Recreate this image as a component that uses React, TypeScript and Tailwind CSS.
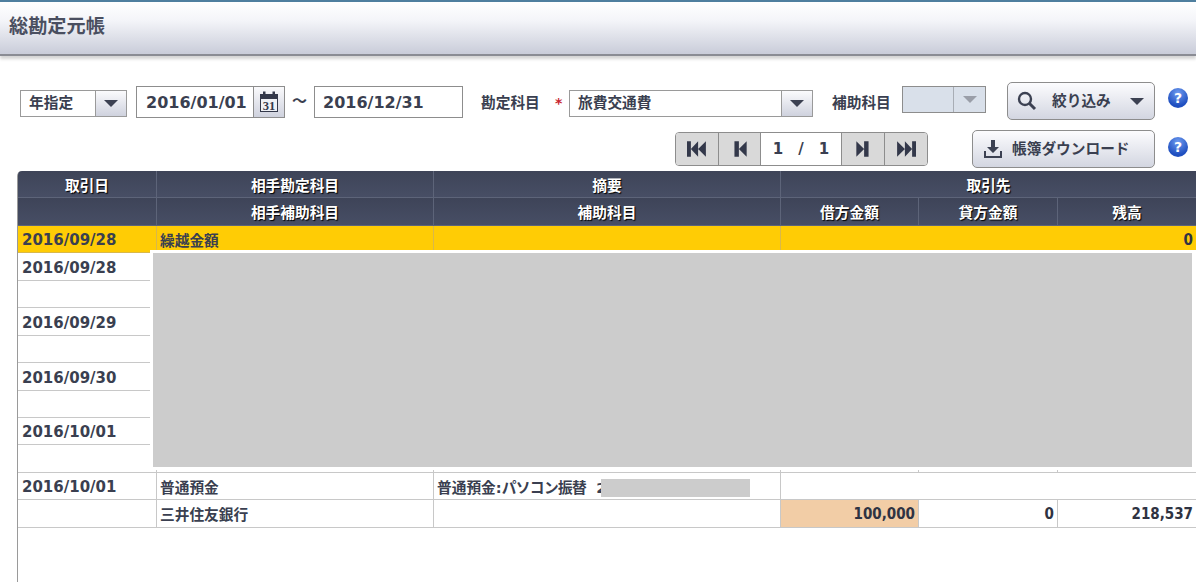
const FONT = "font-['DejaVu_Sans','Noto_Sans_CJK_JP',sans-serif]"

function Arrow({ className = 'fill-[#3c4152]' }: { className?: string }) {
  return (
    <svg width="14" height="7" viewBox="0 0 14 7" className={className}>
      <path d="M0 0h14L7 7z" />
    </svg>
  )
}

function Help({ className = '' }: { className?: string }) {
  return (
    <div className={`flex h-[20px] w-[20px] items-center justify-center rounded-full bg-[radial-gradient(circle_at_50%_25%,#6f9cf0,#1f4fc0_70%)] text-[14px] font-bold leading-none text-white ${className}`}>
      ?
    </div>
  )
}

function CalendarIcon() {
  return (
    <svg width="20" height="22" viewBox="0 0 20 22">
      <rect x="1.500" y="3.500" width="17" height="17" fill="#eef0f4" stroke="#33384a" />
      <rect x="1" y="3" width="18" height="5" fill="#33384a" />
      <rect x="4" y="0.500" width="2.500" height="5" fill="#33384a" />
      <rect x="13.500" y="0.500" width="2.500" height="5" fill="#33384a" />
      <text x="10" y="19" textAnchor="middle" fontSize="12.500" fontWeight="700" fontFamily="Liberation Serif, serif" fill="#33384a">31</text>
    </svg>
  )
}

function Segment({ d, w }: { d: string; w: string }) {
  return (
    <div className={`flex h-full items-center justify-center border-r border-[#8d8d8d] bg-[#d9d9d9] last:border-r-0 ${w}`}>
      <svg width="20" height="18" viewBox="0 0 18 16" className="fill-[#33384a]">
        <path d={d} />
      </svg>
    </div>
  )
}

const cellBase = 'flex items-center border-b border-r border-[#c8c8c8] pl-[3px] pr-[4px] pt-[3px] text-[14.7px] font-bold text-[#3a3f50] whitespace-nowrap overflow-hidden'
const dateBase = 'flex items-center border-b border-r border-[#c8c8c8] pl-[4px] pt-[3px] text-[15px] font-bold text-[#3a3f50]'
const numBase = "flex items-center justify-end border-b border-r border-[#c8c8c8] pr-[3px] pt-[2px] font-['DejaVu_Sans_Condensed','DejaVu_Sans',sans-serif] text-[15px] font-bold text-[#2f3342]"

function HeadCell({ children, span = '' }: { children?: React.ReactNode; span?: string }) {
  return (
    <div className={`flex items-center justify-center border-b border-r border-[#5d6479] bg-[linear-gradient(#3e4458,#474e65)] pt-[3px] text-[14.7px] font-bold text-white [text-shadow:1px_1px_1px_#000] ${span}`}>
      {children}
    </div>
  )
}

const hiddenRows = [
  ['2016/09/28', ''],
  ['', ''],
  ['2016/09/29', ''],
  ['', ''],
  ['2016/09/30', ''],
  ['', ''],
  ['2016/10/01', ''],
  ['', ''],
]

export default function App() {
  return (
    <div className={`h-[582px] w-[1196px] overflow-hidden bg-white ${FONT}`}>
      {/* Title bar */}
      <div className="flex h-[56px] items-center border-t-2 border-b-2 border-t-[#4f7f9f] border-b-[#8a8c94] bg-[linear-gradient(#ffffff,#f4f5f9_35%,#c9ccd9)] pl-[9px] pb-[1px] shadow-[0_3px_3px_#d4d4d4]">
        <h1 className="text-[19.2px] font-bold text-[#4a4f60]">総勘定元帳</h1>
      </div>

      {/* Filter row */}
      <div className="mt-[26px] flex h-[38px] items-start pl-[20px]">
        <div className="mt-[8px] flex h-[27px] w-[107px] border border-[#9a9a9a]">
          <div className="flex flex-1 items-center pl-[8px] text-[14.7px] font-bold text-[#3a3f50]">年指定</div>
          <div className="flex w-[31px] items-center justify-center border-l border-[#9a9a9a] bg-[linear-gradient(#fbfbfd,#cfd2de)]"><Arrow /></div>
        </div>
        <div className="ml-[9px] mt-[4px] flex h-[32px] w-[149px] border border-[#8d8d8d]">
          <div className="flex flex-1 items-center pl-[9px] pt-[1px] text-[16px] font-bold text-[#3a3f50]">2016/01/01</div>
          <div className="flex w-[31px] items-center justify-center border-l border-[#8d8d8d] bg-[linear-gradient(#fafafc,#cfd2de)]"><CalendarIcon /></div>
        </div>
        <div className="ml-[7px] mt-[8px] w-[22px] text-[15px] font-bold text-[#3a3f50]">～</div>
        <div className="mt-[4px] flex h-[32px] w-[149px] items-center border border-[#8d8d8d] pl-[8px] pt-[1px] text-[16px] font-bold text-[#3a3f50]">2016/12/31</div>
        <div className="ml-[18px] mt-[11px] w-[74px] text-[14.7px] font-bold leading-[20px] text-[#3a3f50]">勘定科目</div>
        <div className="mt-[11px] w-[14px] text-[14px] font-bold leading-[20px] text-[#c8242f]">*</div>
        <div className="mt-[8px] flex h-[27px] w-[244px] border border-[#9a9a9a]">
          <div className="flex flex-1 items-center pl-[8px] text-[14.7px] font-bold text-[#3a3f50]">旅費交通費</div>
          <div className="flex w-[31px] items-center justify-center border-l border-[#9a9a9a] bg-[linear-gradient(#fbfbfd,#cfd2de)]"><Arrow /></div>
        </div>
        <div className="ml-[19px] mt-[11px] w-[70px] text-[14.7px] font-bold leading-[20px] text-[#3a3f50]">補助科目</div>
        <div className="mt-[4px] flex h-[27px] w-[84px] border border-[#8d8d8d] bg-[#d9e0ea]">
          <div className="flex-1" />
          <div className="flex w-[32px] items-center justify-center border-l border-[#a8adb5]"><Arrow className="fill-[#9a9ea8]" /></div>
        </div>
        <button className="ml-[21px] flex h-[38px] w-[148px] items-center rounded-[5px] border border-[#8d8d8d] bg-[linear-gradient(#fcfcfe,#d3d6e1)] pl-[9px] text-[14.7px] font-bold text-[#3a3f50]">
          <svg width="20" height="20" viewBox="0 0 20 20" fill="none" stroke="#3c4152" strokeWidth="2.400">
            <circle cx="8" cy="8" r="6" />
            <path d="M12.500 12.500L18 18" strokeWidth="3" />
          </svg>
          <span className="ml-[15px]">絞り込み</span>
          <span className="ml-[19px]"><Arrow /></span>
        </button>
        <Help className="ml-[13px] mt-[6px]" />
      </div>

      {/* Pager row */}
      <div className="mt-[10px] flex h-[38px] items-center pl-[675px]">
        <div className="flex h-[34px] w-[253px] overflow-hidden rounded-[4px] border border-[#8d8d8d]">
          <Segment w="w-[43px]" d="M0 1h3.500v14H0zM10 1v14L3.500 8zM17 1v14L10 8z" />
          <Segment w="w-[42px]" d="M4 1h4v14H4zM15 1v14L8 8z" />
          <div className="flex w-[81px] items-center justify-center gap-[15px] border-r border-[#8d8d8d] bg-white text-[15px] font-bold text-[#3a3f50]">
            <span>1</span><span>/</span><span>1</span>
          </div>
          <Segment w="w-[43px]" d="M3 1v14l7-7zM10 1h4v14h-4z" />
          <Segment w="flex-1" d="M1 1v14l7-7zM8 1v14l6.500-7zM14.500 1H18v14h-3.500z" />
        </div>
        <button className="ml-[44px] flex h-[38px] w-[183px] items-center rounded-[5px] border border-[#8d8d8d] bg-[linear-gradient(#fcfcfe,#d3d6e1)] pl-[10px] text-[14.7px] font-bold text-[#3a3f50]">
          <svg width="20" height="20" viewBox="0 0 20 20" className="fill-[#3c4152]">
            <path d="M8 1h4v7h4l-6 6-6-6h4z" />
            <path d="M1 12h2v5h14v-5h2v7H1z" />
          </svg>
          <span className="ml-[9px]">帳簿ダウンロード</span>
        </button>
        <Help className="-mt-[4px] ml-[13px]" />
      </div>

      {/* Ledger table */}
      <div className="relative ml-[17px] mt-[3px] h-[500px] rounded-tl-[5px] border-l border-[#9a9a9a]">
        <div className="grid grid-cols-[139px_277px_347px_138px_139px_139px] auto-rows-[27.45px] overflow-hidden rounded-tl-[4px]">
          <HeadCell>取引日</HeadCell>
          <HeadCell>相手勘定科目</HeadCell>
          <HeadCell>摘要</HeadCell>
          <HeadCell span="col-span-3">取引先</HeadCell>
          <HeadCell />
          <HeadCell>相手補助科目</HeadCell>
          <HeadCell>補助科目</HeadCell>
          <HeadCell>借方金額</HeadCell>
          <HeadCell>貸方金額</HeadCell>
          <HeadCell>残高</HeadCell>

          <div className={`${dateBase} border-[#d9b84a] bg-[#ffcc05]`}>2016/09/28</div>
          <div className={`${cellBase} border-[#d9b84a] bg-[#ffcc05]`}>繰越金額</div>
          <div className={`${cellBase} border-[#d9b84a] bg-[#ffcc05]`} />
          <div className={`${numBase} col-span-3 border-[#d9b84a] bg-[#ffcc05]`}>0</div>

          {hiddenRows.map(([date], i) => (
            <div key={i} className="contents">
              <div className={dateBase}>{date}</div>
              <div className={cellBase} />
              <div className={cellBase} />
              {i % 2 === 0 ? (
                <div className={`${cellBase} col-span-3`} />
              ) : (
                <>
                  <div className={cellBase} />
                  <div className={cellBase} />
                  <div className={cellBase} />
                </>
              )}
            </div>
          ))}

          <div className={dateBase}>2016/10/01</div>
          <div className={cellBase}>普通預金</div>
          <div className={`${cellBase} relative`}>
            普通預金:<span className="tracking-[-0.6px]">パソコン振替</span><span className="ml-[10px]">2</span>
            <div className="absolute left-[167px] top-[6px] h-[18px] w-[149px] bg-[#cccccc]" />
          </div>
          <div className={`${cellBase} col-span-3`} />

          <div className={dateBase} />
          <div className={cellBase}>三井住友銀行</div>
          <div className={cellBase} />
          <div className={`${numBase} bg-[#f2cda6]`}>100,000</div>
          <div className={numBase}>0</div>
          <div className={numBase}>218,537</div>
        </div>

        {/* Redaction block over the hidden rows */}
        <div className="absolute left-[132px] right-0 top-[79px] h-[220px] bg-white pb-[3px] pl-[3px] pr-[4px] pt-[3px]">
          <div className="h-full bg-[#cccccc]" />
        </div>
      </div>
    </div>
  )
}
